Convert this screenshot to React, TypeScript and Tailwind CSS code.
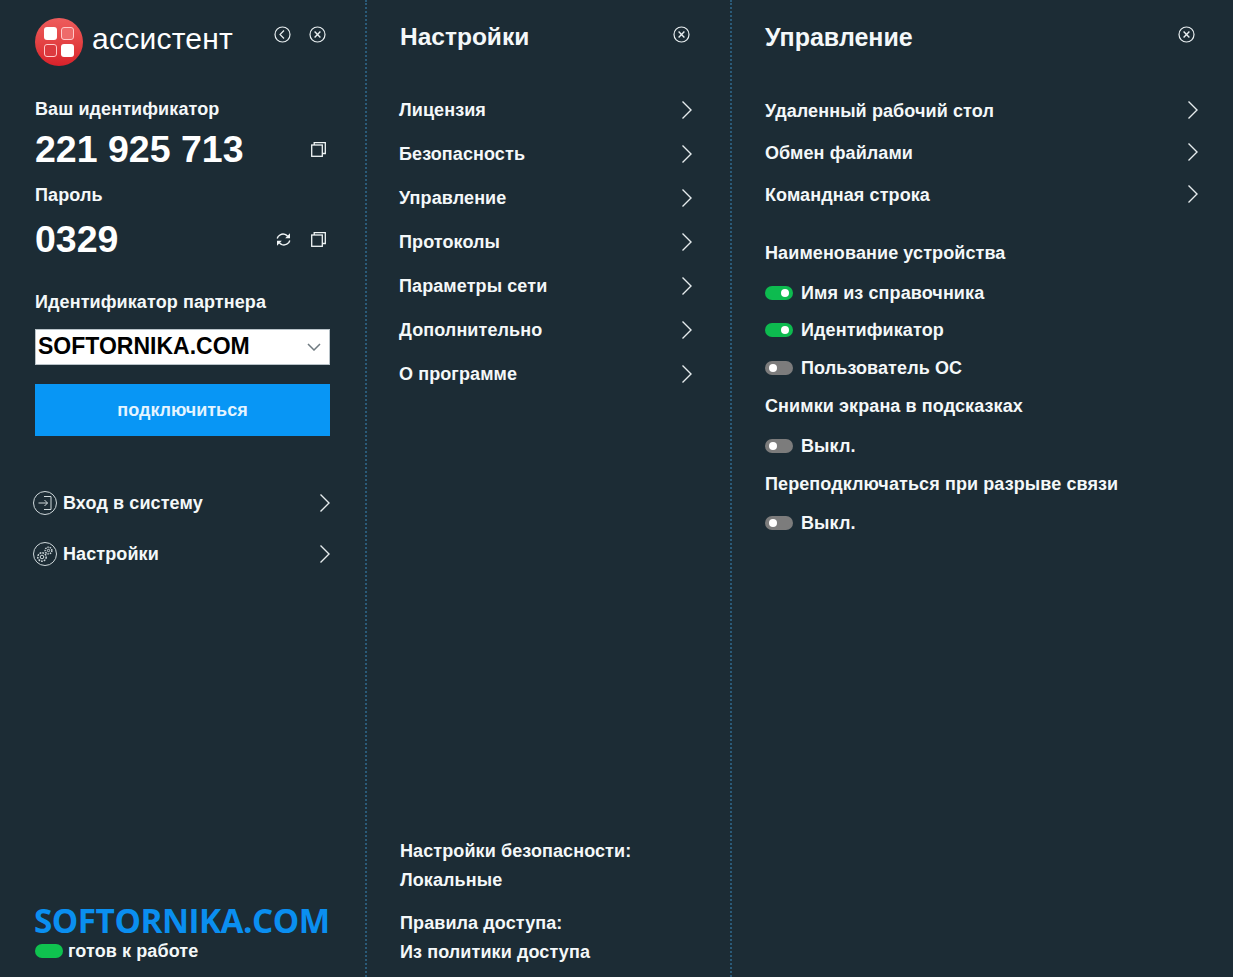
const rowText = "text-[18px] font-bold text-[#f4f8f9] tracking-[0.1px]";

function Chevron({ className = "" }: { className?: string }) {
  return (
    <svg width="12" height="20" viewBox="0 0 12 20" fill="none" stroke="#e6ecee" strokeWidth="1.4" className={className}>
      <path d="M1.5 1.5 L10 10 L1.5 18.5" />
    </svg>
  );
}

function CircleClose() {
  return (
    <svg width="17" height="17" viewBox="0 0 17 17" fill="none" stroke="#e9eff1" strokeWidth="1.2">
      <circle cx="8.5" cy="8.5" r="7.5" />
      <path d="M5.6 5.6 L11.4 11.4 M11.4 5.6 L5.6 11.4" strokeWidth="1.4" />
    </svg>
  );
}

function CircleBack() {
  return (
    <svg width="17" height="17" viewBox="0 0 17 17" fill="none" stroke="#e9eff1" strokeWidth="1.2">
      <circle cx="8.5" cy="8.5" r="7.5" />
      <path d="M10 4.5 L6 8.5 L10 12.5" />
    </svg>
  );
}

function CopyIcon() {
  return (
    <svg width="15" height="15" viewBox="0 0 15 15" fill="none" stroke="#f0f5f6" strokeWidth="1.3" className="shrink-0">
      <rect x="0.7" y="3" width="10.6" height="11.3" />
      <path d="M3.2 3 V0.7 H14.3 V11.5 H11.3" />
    </svg>
  );
}

function RefreshIcon() {
  return (
    <svg width="15" height="15" viewBox="0 0 15 15" fill="none" stroke="#f0f5f6" strokeWidth="1.4" className="shrink-0">
      <path d="M1.2 6.5 C2 3.2 5.8 1.3 9 2.4 C10 2.8 10.8 3.3 11.6 4.2" />
      <path d="M14 1.2 V6.2 H9.2 Z" fill="#f0f5f6" stroke="none" />
      <path d="M13.8 8.5 C13 11.8 9.2 13.7 6 12.6 C5 12.2 4.2 11.7 3.4 10.8" />
      <path d="M1 13.8 V8.8 H5.8 Z" fill="#f0f5f6" stroke="none" />
    </svg>
  );
}

function LoginIcon() {
  return (
    <svg width="24" height="24" viewBox="0 0 24 24" fill="none" stroke="#cfd8db" strokeWidth="1" className="shrink-0">
      <circle cx="12" cy="12" r="11.5" />
      <path d="M5.5 12 H14.5 M11.5 9 L14.5 12 L11.5 15" />
      <path d="M11 5.5 H18 V18.5 H11" />
    </svg>
  );
}

function GearsIcon() {
  return (
    <svg width="24" height="24" viewBox="0 0 24 24" fill="none" stroke="#cfd8db" strokeWidth="1" className="shrink-0">
      <circle cx="12" cy="12" r="11.5" />
      <circle cx="9" cy="15" r="4.2" strokeDasharray="1.8 1" strokeWidth="1.5" />
      <circle cx="9" cy="15" r="1.8" />
      <circle cx="15.5" cy="8.5" r="3.4" strokeDasharray="1.5 0.9" strokeWidth="1.4" />
      <circle cx="15.5" cy="8.5" r="1.2" />
    </svg>
  );
}

function Logo() {
  return (
    <div className="w-[48px] h-[48px] rounded-full bg-gradient-to-b from-[#ee5c5c] to-[#d9202a] grid grid-cols-2 grid-rows-2 gap-[4px] p-[9px] shrink-0">
      <div className="rounded-[3px] bg-white" />
      <div className="rounded-[3px] border border-[#ffc9c9] bg-[#ee6a6a]" />
      <div className="rounded-[3px] border border-[#ffc9c9] bg-[#dc3a3f]" />
      <div className="rounded-[3px] bg-white" />
    </div>
  );
}

function Toggle({ on }: { on: boolean }) {
  return (
    <div className={`w-[28px] h-[14px] rounded-full flex items-center px-[4px] shrink-0 ${on ? "bg-[#0dbb4f] justify-end" : "bg-[#7c7c7c] justify-start"}`}>
      <div className="w-[8px] h-[8px] rounded-full bg-white" />
    </div>
  );
}

function ToggleRow({ on, label, className = "" }: { on: boolean; label: string; className?: string }) {
  return (
    <div className={`flex items-center gap-[8px] ${className}`}>
      <Toggle on={on} />
      <span className={rowText}>{label}</span>
    </div>
  );
}

const settings = ["Лицензия", "Безопасность", "Управление", "Протоколы", "Параметры сети", "Дополнительно", "О программе"];
const manage = ["Удаленный рабочий стол", "Обмен файлами", "Командная строка"];

export default function App() {
  return (
    <div className="w-[1233px] h-[977px] overflow-hidden bg-[#1c2c35] flex font-['Liberation_Sans',Arial,sans-serif] text-[#f4f8f9]">
      <div className="w-[367px] h-full shrink-0 border-r-2 border-dotted border-[#2a5a78] pl-[35px] pr-[35px] flex flex-col">
        <div className="flex items-start h-[84px] pt-[18px]">
          <Logo />
          <span className="ml-[9px] mt-[3px] text-[30px] leading-[36px] font-normal tracking-[0.25px] text-white">ассистент</span>
          <div className="ml-auto flex gap-[18px] mt-[8px] mr-[4px]">
            <CircleBack />
            <CircleClose />
          </div>
        </div>
        <div className={`${rowText} leading-[22px] mt-[14px]`}>Ваш идентификатор</div>
        <div className="flex items-center justify-between h-[44px] mt-[7px] pr-[4px]">
          <span className="text-[37.5px] font-bold text-white leading-[44px]">221 925 713</span>
          <CopyIcon />
        </div>
        <div className={`${rowText} leading-[22px] mt-[13px]`}>Пароль</div>
        <div className="flex items-center h-[44px] mt-[11px] pr-[4px]">
          <span className="text-[37.5px] font-bold text-white leading-[44px]">0329</span>
          <div className="ml-auto flex gap-[20px]">
            <RefreshIcon />
            <CopyIcon />
          </div>
        </div>
        <div className={`${rowText} leading-[22px] mt-[30px]`}>Идентификатор партнера</div>
        <div className="h-[36px] mt-[16px] w-[295px] bg-white border border-[#b8c2c8] flex items-center pl-[2px] pr-[8px]">
          <span className="text-[23px] leading-[30px] pb-[2px] font-bold text-black">SOFTORNIKA.COM</span>
          <svg width="14" height="8" viewBox="0 0 14 8" fill="none" stroke="#6f7a80" strokeWidth="1.5" className="ml-auto">
            <path d="M1 1 L7 7 L13 1" />
          </svg>
        </div>
        <div className="h-[52px] mt-[19px] w-[295px] bg-[#0896f5] flex items-center justify-center text-[18px] font-bold text-[#e4f4ff]">подключиться</div>
        <div className="flex items-center h-[24px] mt-[55px] -ml-[2px] w-[298px]">
          <LoginIcon />
          <span className={`${rowText} ml-[6px]`}>Вход в систему</span>
          <Chevron className="ml-auto" />
        </div>
        <div className="flex items-center h-[24px] mt-[27px] -ml-[2px] w-[298px]">
          <GearsIcon />
          <span className={`${rowText} ml-[6px]`}>Настройки</span>
          <Chevron className="ml-auto" />
        </div>
        <div className="mt-auto pb-[15px]">
          <div className="font-['Open_Sans',sans-serif] text-[33.3px] leading-[36px] font-bold text-[#0a8ff0] -ml-[1px] tracking-[-0.5px]">SOFTORNIKA.COM</div>
          <div className="flex items-center mt-[2px]">
            <div className="w-[28px] h-[14px] rounded-full bg-[#0fc24f]" />
            <span className={`${rowText} ml-[5px] leading-[22px]`}>готов к работе</span>
          </div>
        </div>
      </div>

      <div className="w-[365px] h-full shrink-0 border-r-2 border-dotted border-[#2a5a78] pl-[32px] pr-[37px] flex flex-col">
        <div className="flex items-start justify-between h-[36px] mt-[19px] pl-[1px] pr-[3px]">
          <span className="text-[24.5px] leading-[36px] font-bold text-[#f4f8f9]">Настройки</span>
          <div className="mt-[7px]">
            <CircleClose />
          </div>
        </div>
        <div className="flex flex-col mt-[33px]">
          {settings.map((s) => (
            <div key={s} className="h-[44px] flex items-center justify-between">
              <span className={rowText}>{s}</span>
              <Chevron />
            </div>
          ))}
        </div>
        <div className={`mt-auto pb-[10px] pl-[1px] ${rowText}`}>
          <div className="leading-[29px]">Настройки безопасности:</div>
          <div className="leading-[29px]">Локальные</div>
          <div className="leading-[29px] mt-[14px]">Правила доступа:</div>
          <div className="leading-[29px]">Из политики доступа</div>
        </div>
      </div>

      <div className="flex-1 h-full pl-[33px] pr-[34px] flex flex-col">
        <div className="flex items-start justify-between h-[36px] mt-[19px]">
          <span className="text-[25px] leading-[36px] font-bold text-[#f4f8f9]">Управление</span>
          <div className="mr-[4px] mt-[7px]">
            <CircleClose />
          </div>
        </div>
        <div className="flex flex-col mt-[35px]">
          {manage.map((s) => (
            <div key={s} className="h-[42px] flex items-center justify-between">
              <span className={rowText}>{s}</span>
              <Chevron className="-mt-[2px]" />
            </div>
          ))}
        </div>
        <div className={`${rowText} leading-[22px] mt-[26px]`}>Наименование устройства</div>
        <ToggleRow on label="Имя из справочника" className="h-[22px] mt-[18px]" />
        <ToggleRow on label="Идентификатор" className="h-[22px] mt-[15px]" />
        <ToggleRow on={false} label="Пользователь ОС" className="h-[22px] mt-[16px]" />
        <div className={`${rowText} leading-[22px] mt-[16px]`}>Снимки экрана в подсказках</div>
        <ToggleRow on={false} label="Выкл." className="h-[22px] mt-[18px]" />
        <div className={`${rowText} leading-[22px] mt-[16px]`}>Переподключаться при разрыве связи</div>
        <ToggleRow on={false} label="Выкл." className="h-[22px] mt-[17px]" />
      </div>
    </div>
  );
}
